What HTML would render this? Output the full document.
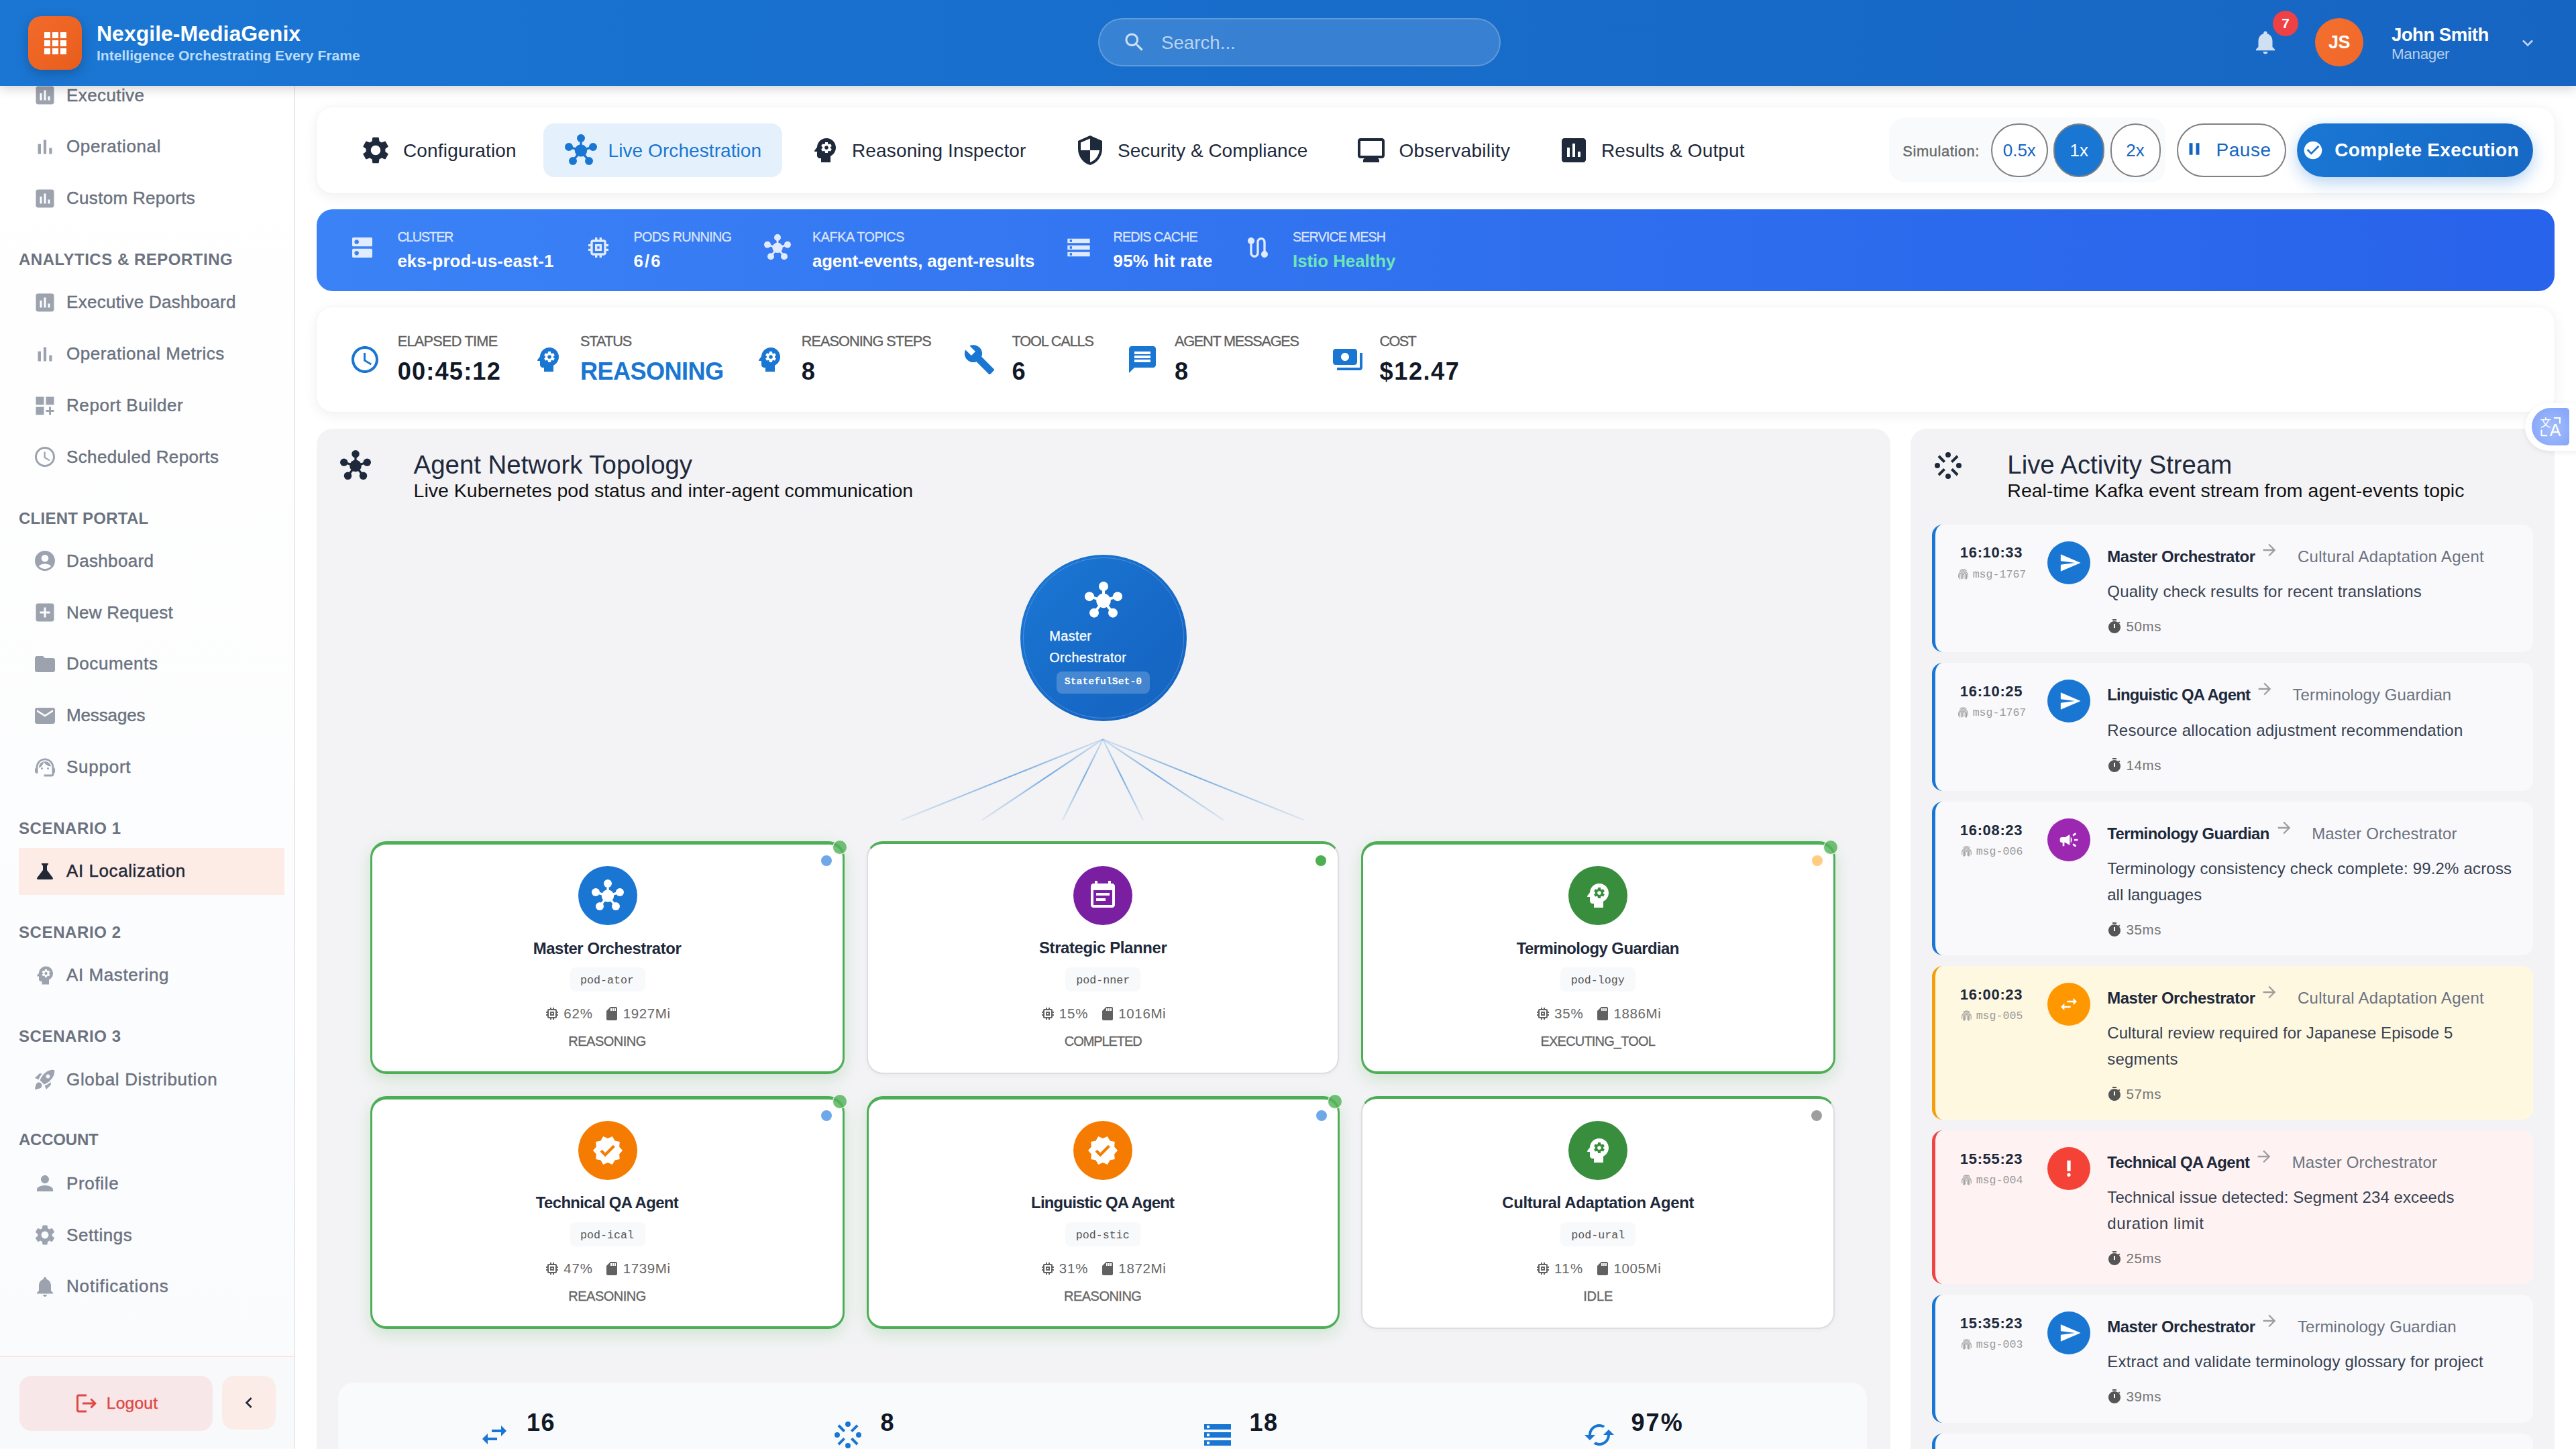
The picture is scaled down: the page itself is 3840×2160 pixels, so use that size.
<!DOCTYPE html>
<html lang="en"><head><meta charset="utf-8"><title>Nexgile-MediaGenix</title>
<style>
*{box-sizing:border-box;margin:0;padding:0}
html,body{width:3840px;height:2160px;overflow:hidden;background:#fff}
@media (max-width:2000px){html{zoom:.5}}
body{font-family:"Liberation Sans",sans-serif;color:#1f2937;position:relative;-webkit-font-smoothing:antialiased}
.ic{display:block;flex:none}
.abs{position:absolute}
.mono{font-family:"Liberation Mono","DejaVu Sans Mono",monospace}
/* ---------- header ---------- */
#hdr{position:absolute;left:0;top:0;width:3840px;height:128px;background:linear-gradient(90deg,#1b76d3 0%,#186dcb 50%,#1765c2 100%);box-shadow:0 4px 16px rgba(0,0,0,.18);z-index:20}
#logo{position:absolute;left:42px;top:24px;width:80px;height:80px;border-radius:20px;background:linear-gradient(135deg,#f26b2a,#e85d1c);box-shadow:0 6px 18px rgba(0,0,0,.22)}
#logo i{position:absolute;width:9px;height:9px;background:#fff}
#brand{position:absolute;left:144px;top:28.2px;font-size:32px;font-weight:700;color:#fff;line-height:44px;white-space:nowrap}
#tag{position:absolute;left:144px;top:68px;font-size:21.1px;font-weight:700;color:#bbdcfb;line-height:30px;white-space:nowrap}
#search{position:absolute;left:1637px;top:27px;width:600px;height:72px;border-radius:36px;background:rgba(255,255,255,.14);border:2px solid rgba(255,255,255,.2)}
#search span{position:absolute;left:92px;top:13px;font-size:27.7px;line-height:44px;color:rgba(255,255,255,.66)}
#badge{position:absolute;left:3388px;top:16px;width:38px;height:38px;border-radius:50%;background:#ee4145;color:#fff;font-weight:700;font-size:21px;line-height:38px;text-align:center}
#avatar{position:absolute;left:3451px;top:27px;width:72px;height:72px;border-radius:50%;background:linear-gradient(135deg,#f46f2c,#f0682b);color:#fff;font-weight:700;font-size:27px;line-height:72px;text-align:center;letter-spacing:-.5px}
#uname{position:absolute;left:3565px;top:31.5px;font-size:27.6px;font-weight:700;color:#fff;line-height:40px;white-space:nowrap;letter-spacing:-0.55px}
#urole{position:absolute;left:3565px;top:66px;font-size:22.4px;letter-spacing:-.3px;color:rgba(255,255,255,.7);line-height:30px;white-space:nowrap}
/* ---------- sidebar ---------- */
#side{position:absolute;left:0;top:128px;width:440px;height:2032px;background:linear-gradient(180deg,#ffffff 0%,#fafbfd 100%);border-right:2px solid #e8eaee;overflow:hidden;z-index:5}
.si{position:absolute;left:28px;width:396px;height:70px;display:flex;align-items:center;padding-left:21px;color:#6b7280;font-size:26px;white-space:nowrap}
.si .ic{margin-right:14px}
.si span{-webkit-text-stroke:.45px currentColor}
.si.act{background:#fdebe6;color:#1f2937}
.sh{position:absolute;left:28px;font-size:24px;font-weight:700;letter-spacing:2.5px;color:#6b7280;line-height:30px;white-space:nowrap}
#sfoot{position:absolute;left:0;top:1892.5px;width:438px;height:137px;background:#f8f9fa;border-top:2px solid #fde3de}
#logout{position:absolute;left:29px;top:28px;width:288px;height:82px;border-radius:18px;background:#f8e7e8;color:#e04644;font-size:24.6px;display:flex;align-items:center;justify-content:center}
#logout .ic{margin-right:12px}
#logout span{-webkit-text-stroke:.4px currentColor}
#collapse{position:absolute;left:331px;top:28px;width:80px;height:80px;border-radius:18px;background:#fbece7;display:flex;align-items:center;justify-content:center}
/* ---------- main ---------- */
.tx{position:absolute;white-space:nowrap}
.card{position:absolute;background:#fff;border-radius:24px;box-shadow:0 4px 20px rgba(15,23,42,.07),0 0 3px rgba(15,23,42,.04)}
#tabs{left:472px;top:160px;width:3336px;height:128px}
.tabact{position:absolute;left:338px;top:24px;width:356px;height:80px;border-radius:16px;background:#e4f1fd}
#simgrp{position:absolute;left:2344px;top:15px;width:412px;height:97px;border-radius:24px;background:#f8fafc}
.pill{position:absolute;top:24px;height:80px;border-radius:40px;border:2px solid #808080;background:#fff;color:#1565c0;text-align:center;line-height:76px;font-size:26px;white-space:nowrap}
.pill.on{background:#1976d2;color:#fff}
#complete{position:absolute;left:2952px;top:24px;width:352px;height:80px;border-radius:40px;background:linear-gradient(100deg,#1a77d4,#1668c4);box-shadow:0 8px 24px rgba(25,118,210,.32)}
#cluster{position:absolute;left:472px;top:312px;width:3336px;height:122px;border-radius:24px;background:linear-gradient(90deg,#3b82f6 0%,#2f6fee 55%,#2863eb 100%)}
#stats{left:472px;top:458px;width:3336px;height:156px}
/* ---------- topology ---------- */
#topo{position:absolute;left:472px;top:639px;width:2346px;height:1560px;border-radius:24px;background:#f3f3f5}
#bigc{position:absolute;left:1048.5px;top:187.5px;width:248px;height:248px;border-radius:50%;background:linear-gradient(135deg,#1b78d4 0%,#1769c7 60%,#1563c0 100%)}
#bigc:after{content:"";position:absolute;left:4px;top:4px;right:4px;bottom:4px;border-radius:50%;border:1.5px solid rgba(255,255,255,.22)}
#sset{position:absolute;left:54px;top:174px;width:139px;height:33px;border-radius:8px;background:rgba(255,255,255,.2)}
.ag{position:absolute;width:707px;height:348px;border-radius:24px;background:#fff;overflow:hidden}
.ag.on{border:4px solid #4eae57;border-top-width:5px;border-left-width:3.5px;border-right-width:3.5px;box-shadow:0 8px 24px rgba(76,175,80,.22)}
.ag.off{border:2px solid #dcdde0;border-top:4.5px solid #4eae57;box-shadow:0 2px 6px rgba(0,0,0,.04)}
.ag .circ{position:absolute;left:50%;top:37px;width:88px;height:88px;margin-left:-44px;border-radius:50%;display:flex;align-items:center;justify-content:center}
.podchip{position:absolute;left:50%;top:188.5px;width:112px;height:36px;margin-left:-56px;border-radius:8px;background:#f7f9fb}
.gdot{position:absolute;width:22px;height:22px;border-radius:50%;background:rgba(84,178,90,.82);border:1.5px solid rgba(255,255,255,.85);z-index:3}
.sdot{position:absolute;width:16px;height:16px;border-radius:50%;z-index:3}
#strip{position:absolute;left:32px;top:1422px;width:2279px;height:160px;border-radius:24px;background:#f8fafc}
/* ---------- activity ---------- */
#act{position:absolute;left:2848px;top:639px;width:960px;height:1560px;border-radius:24px;background:#f3f3f5;overflow:hidden}
.ev{position:absolute;left:32px;width:896px;border-radius:16px;border-left:5.5px solid #1976d2;background:#f9fafb}
.ev .cir{position:absolute;left:164.7px;top:24.9px;width:64px;height:64px;border-radius:50%;display:flex;align-items:center;justify-content:center}
.ev .row{position:absolute;left:253.8px;display:flex;align-items:flex-start;white-space:nowrap}
.ev .msgid{position:absolute;left:9px;width:160px;display:flex;justify-content:center;align-items:center;color:#999;font-size:16.6px;white-space:nowrap}
#xl{position:absolute;left:3764px;top:600.5px;width:90px;height:71px;border-radius:36px 0 0 36px;background:#fff;box-shadow:0 2px 8px rgba(0,0,0,.08);z-index:9}
#xl i{position:absolute;left:9.8px;top:7.6px;width:56.2px;height:56px;border-radius:28px 5px 5px 28px;background:radial-gradient(circle at 55% 55%,#a3bdf9 0%,#8aa9fb 70%,#86a4fb 100%)}
</style></head>
<body>
<div id="hdr"><div id="logo"><i style="left:23.5px;top:23.5px"></i><i style="left:35.5px;top:23.5px"></i><i style="left:47.5px;top:23.5px"></i><i style="left:23.5px;top:35.5px"></i><i style="left:35.5px;top:35.5px"></i><i style="left:47.5px;top:35.5px"></i><i style="left:23.5px;top:47.5px"></i><i style="left:35.5px;top:47.5px"></i><i style="left:47.5px;top:47.5px"></i></div><div id="brand">Nexgile-MediaGenix</div><div id="tag">Intelligence Orchestrating Every Frame</div><div id="search"><svg class="ic" style="width:36px;height:36px;position:absolute;left:34px;top:16px" viewBox="0 0 24 24" fill="rgba(255,255,255,.75)"><path d="M15.5 14h-.79l-.28-.27C15.41 12.59 16 11.11 16 9.5 16 5.91 13.09 3 9.5 3S3 5.91 3 9.5 5.91 16 9.5 16c1.61 0 3.09-.59 4.23-1.57l.27.28v.79l5 4.99L20.49 19l-4.99-5zm-6 0C7.01 14 5 11.99 5 9.5S7.01 5 9.5 5 14 7.01 14 9.5 11.99 14 9.5 14z"/></svg><span>Search...</span></div><svg class="ic" style="width:42px;height:42px;position:absolute;left:3356px;top:42px" viewBox="0 0 24 24" fill="rgba(255,255,255,.8)"><path d="M12 22c1.1 0 2-.9 2-2h-4c0 1.1.89 2 2 2zm6-6v-5c0-3.07-1.64-5.64-4.5-6.32V4c0-.83-.67-1.5-1.5-1.5s-1.5.67-1.5 1.5v.68C7.63 5.36 6 7.92 6 11v5l-2 2v1h16v-1l-2-2z"/></svg><div id="badge">7</div><div id="avatar">JS</div><div id="uname">John Smith</div><div id="urole">Manager</div><svg class="ic" style="width:32px;height:32px;position:absolute;left:3752px;top:48px" viewBox="0 0 24 24" fill="rgba(255,255,255,.75)"><path d="M7.41 8.59 12 13.17l4.59-4.58L18 10l-6 6-6-6 1.41-1.41z"/></svg></div><div id="side"><div class="si" style="top:-20.9px"><svg class="ic" style="width:36px;height:36px;" viewBox="0 0 24 24" fill="#9ca3af"><path d="M19 3H5c-1.1 0-2 .9-2 2v14c0 1.1.9 2 2 2h14c1.1 0 2-.9 2-2V5c0-1.1-.9-2-2-2zM9 17H7v-7h2v7zm4 0h-2V7h2v10zm4 0h-2v-4h2v4z"/></svg><span style="letter-spacing:0.4px">Executive</span></div><div class="si" style="top:55.9px"><svg class="ic" style="width:36px;height:36px;" viewBox="0 0 24 24" fill="#9ca3af"><path d="M5 9.2h3V19H5zM10.6 5h2.8v14h-2.8zm5.6 8H19v6h-2.8z"/></svg><span style="letter-spacing:0.6px">Operational</span></div><div class="si" style="top:132.7px"><svg class="ic" style="width:36px;height:36px;" viewBox="0 0 24 24" fill="#9ca3af"><path d="M19 3H5c-1.1 0-2 .9-2 2v14c0 1.1.9 2 2 2h14c1.1 0 2-.9 2-2V5c0-1.1-.9-2-2-2zM9 17H7v-7h2v7zm4 0h-2V7h2v10zm4 0h-2v-4h2v4z"/></svg><span style="letter-spacing:0.31px">Custom Reports</span></div><div class="sh" style="top:244.1px;letter-spacing:0.51px">ANALYTICS &amp; REPORTING</div><div class="si" style="top:287.9px"><svg class="ic" style="width:36px;height:36px;" viewBox="0 0 24 24" fill="#9ca3af"><path d="M19 3H5c-1.1 0-2 .9-2 2v14c0 1.1.9 2 2 2h14c1.1 0 2-.9 2-2V5c0-1.1-.9-2-2-2zM9 17H7v-7h2v7zm4 0h-2V7h2v10zm4 0h-2v-4h2v4z"/></svg><span style="letter-spacing:0.3px">Executive Dashboard</span></div><div class="si" style="top:364.7px"><svg class="ic" style="width:36px;height:36px;" viewBox="0 0 24 24" fill="#9ca3af"><path d="M5 9.2h3V19H5zM10.6 5h2.8v14h-2.8zm5.6 8H19v6h-2.8z"/></svg><span style="letter-spacing:0.55px">Operational Metrics</span></div><div class="si" style="top:441.5px"><svg class="ic" style="width:36px;height:36px;" viewBox="0 0 24 24" fill="#9ca3af"><path d="M3 3h8v8H3zm10 0h8v8h-8zM3 13h8v8H3zm15 0h-2v3h-3v2h3v3h2v-3h3v-2h-3z"/></svg><span style="letter-spacing:0.58px">Report Builder</span></div><div class="si" style="top:518.3px"><svg class="ic" style="width:36px;height:36px;" viewBox="0 0 24 24" fill="#9ca3af"><path d="M11.99 2C6.47 2 2 6.48 2 12s4.47 10 9.99 10C17.52 22 22 17.52 22 12S17.52 2 11.99 2zM12 20c-4.42 0-8-3.58-8-8s3.58-8 8-8 8 3.58 8 8-3.58 8-8 8zm.5-13H11v6l5.25 3.15.75-1.23-4.5-2.67z"/></svg><span style="letter-spacing:0.36px">Scheduled Reports</span></div><div class="sh" style="top:629.5px;letter-spacing:0.25px">CLIENT PORTAL</div><div class="si" style="top:673.3px"><svg class="ic" style="width:36px;height:36px;" viewBox="0 0 24 24" fill="#9ca3af"><path d="M12 2C6.48 2 2 6.48 2 12s4.48 10 10 10 10-4.48 10-10S17.52 2 12 2zm0 4c1.93 0 3.5 1.57 3.5 3.5S13.93 13 12 13s-3.5-1.57-3.5-3.5S10.07 6 12 6zm0 14c-2.03 0-4.43-.82-6.14-2.88C7.55 15.8 9.68 15 12 15s4.45.8 6.14 2.12C16.43 19.18 14.03 20 12 20z"/></svg><span style="letter-spacing:0.35px">Dashboard</span></div><div class="si" style="top:750.1px"><svg class="ic" style="width:36px;height:36px;" viewBox="0 0 24 24" fill="#9ca3af"><path d="M19 3H5c-1.11 0-2 .9-2 2v14c0 1.1.89 2 2 2h14c1.1 0 2-.9 2-2V5c0-1.1-.9-2-2-2zm-2 10h-4v4h-2v-4H7v-2h4V7h2v4h4v2z"/></svg><span style="letter-spacing:0.27px">New Request</span></div><div class="si" style="top:826.9px"><svg class="ic" style="width:36px;height:36px;" viewBox="0 0 24 24" fill="#9ca3af"><path d="M10 4H4c-1.1 0-1.99.9-1.99 2L2 18c0 1.1.9 2 2 2h16c1.1 0 2-.9 2-2V8c0-1.1-.9-2-2-2h-8l-2-2z"/></svg><span style="letter-spacing:0.55px">Documents</span></div><div class="si" style="top:903.7px"><svg class="ic" style="width:36px;height:36px;" viewBox="0 0 24 24" fill="#9ca3af"><path d="M20 4H4c-1.1 0-1.99.9-1.99 2L2 18c0 1.1.9 2 2 2h16c1.1 0 2-.9 2-2V6c0-1.1-.9-2-2-2zm0 4-8 5-8-5V6l8 5 8-5v2z"/></svg><span style="letter-spacing:-0.14px">Messages</span></div><div class="si" style="top:980.5px"><svg class="ic" style="width:36px;height:36px;" viewBox="0 0 24 24" fill="#9ca3af"><path d="M21 12.22C21 6.73 16.74 3 12 3c-4.69 0-9 3.65-9 9.28-.6.34-1 .98-1 1.72v2c0 1.1.9 2 2 2h1v-6.1c0-3.87 3.13-7 7-7s7 3.13 7 7V19h-8v2h8c1.1 0 2-.9 2-2v-1.22c.59-.31 1-.92 1-1.64v-2.3c0-.7-.41-1.31-1-1.62zM9 12a1 1 0 1 0 0 2 1 1 0 0 0 0-2zm6 0a1 1 0 1 0 0 2 1 1 0 0 0 0-2zM18 11.03C17.52 8.18 15.04 6 12.05 6c-3.03 0-6.29 2.51-6.03 6.45 2.47-1.01 4.33-3.21 4.86-5.89 1.31 2.63 4 4.44 7.12 4.47z"/></svg><span style="letter-spacing:0.75px">Support</span></div><div class="sh" style="top:1091.9px;letter-spacing:0.6px">SCENARIO 1</div><div class="si act" style="top:1135.7px"><svg class="ic" style="width:36px;height:36px;" viewBox="0 0 24 24" fill="#1f2937"><path d="M19.8 18.4 14 10.67V6.5l1.35-1.69c.26-.33.03-.81-.39-.81H9.04c-.42 0-.65.48-.39.81L10 6.5v4.17L4.2 18.4c-.49.66-.02 1.6.8 1.6h14c.82 0 1.29-.94.8-1.6z"/></svg><span style="letter-spacing:0.58px">AI Localization</span></div><div class="sh" style="top:1247.1px;letter-spacing:0.6px">SCENARIO 2</div><div class="si" style="top:1290.9px"><svg class="ic" style="width:36px;height:36px;" viewBox="0 0 24 24" fill="#9ca3af"><path d="M13 8.57c-.79 0-1.43.64-1.43 1.43s.64 1.43 1.43 1.43 1.43-.64 1.43-1.43-.64-1.43-1.43-1.43zM13 3C9.25 3 6.2 5.94 6.02 9.64L4.1 12.2c-.25.33-.01.8.4.8H6v3c0 1.1.9 2 2 2h1v3h7v-4.68c2.36-1.12 4-3.53 4-6.32 0-3.87-3.13-7-7-7zm3 7c0 .13-.01.26-.02.39l.83.66c.08.06.1.16.05.25l-.8 1.39c-.05.09-.16.12-.24.09l-.99-.4c-.21.16-.43.29-.67.39L14 13.83c-.01.1-.1.17-.2.17h-1.6c-.1 0-.18-.07-.2-.17l-.15-1.06c-.25-.1-.47-.23-.68-.39l-.99.4c-.09.03-.2 0-.25-.09l-.8-1.39c-.05-.08-.03-.19.05-.25l.84-.66c-.01-.13-.02-.26-.02-.39s.02-.27.04-.39l-.85-.66c-.08-.06-.1-.16-.05-.26l.8-1.38c.05-.09.15-.12.24-.09l1 .4c.2-.15.43-.29.67-.39L12 6.17c.02-.1.1-.17.2-.17h1.6c.1 0 .18.07.2.17l.15 1.06c.24.1.46.23.67.39l1-.4c.09-.03.2 0 .24.09l.8 1.38c.05.09.03.2-.05.26l-.85.66c.03.12.04.25.04.39z"/></svg><span style="letter-spacing:0.59px">AI Mastering</span></div><div class="sh" style="top:1402.3px;letter-spacing:0.6px">SCENARIO 3</div><div class="si" style="top:1446.1px"><svg class="ic" style="width:36px;height:36px;" viewBox="0 0 24 24" fill="#9ca3af"><path d="M9.19 6.35c-2.04 2.29-3.44 5.58-3.57 5.89L2 10.69l4.05-4.05c.47-.47 1.15-.68 1.81-.55l1.33.26zM11.17 17s3.74-1.55 5.89-3.7c5.4-5.4 4.5-9.62 4.21-10.57-.95-.3-5.17-1.19-10.57 4.21C8.55 9.09 7 12.83 7 12.83L11.17 17zm6.48-2.19c-2.29 2.04-5.58 3.44-5.89 3.57L13.31 22l4.05-4.05c.47-.47.68-1.15.55-1.81l-.26-1.33zM9 18c0 .83-.34 1.58-.88 2.12C6.94 21.3 2 22 2 22s.7-4.94 1.88-6.12C4.42 15.34 5.17 15 6 15c1.66 0 3 1.34 3 3zm4-9c0-1.1.9-2 2-2s2 .9 2 2-.9 2-2 2-2-.9-2-2z"/></svg><span style="letter-spacing:0.68px">Global Distribution</span></div><div class="sh" style="top:1555.5px;letter-spacing:-0.21px">ACCOUNT</div><div class="si" style="top:1601.3px"><svg class="ic" style="width:36px;height:36px;" viewBox="0 0 24 24" fill="#9ca3af"><path d="M12 12c2.21 0 4-1.79 4-4s-1.79-4-4-4-4 1.79-4 4 1.79 4 4 4zm0 2c-2.67 0-8 1.34-8 4v2h16v-2c0-2.66-5.33-4-8-4z"/></svg><span style="letter-spacing:0.67px">Profile</span></div><div class="si" style="top:1678.1px"><svg class="ic" style="width:36px;height:36px;" viewBox="0 0 24 24" fill="#9ca3af"><path d="M19.14 12.94c.04-.3.06-.61.06-.94 0-.32-.02-.64-.07-.94l2.03-1.58c.18-.14.23-.41.12-.61l-1.92-3.32c-.12-.22-.37-.29-.59-.22l-2.39.96c-.5-.38-1.03-.7-1.62-.94l-.36-2.54c-.04-.24-.24-.41-.48-.41h-3.84c-.24 0-.43.17-.47.41l-.36 2.54c-.59.24-1.13.57-1.62.94l-2.39-.96c-.22-.08-.47 0-.59.22L2.74 8.87c-.12.21-.08.47.12.61l2.03 1.58c-.05.3-.09.63-.09.94s.02.64.07.94l-2.03 1.58c-.18.14-.23.41-.12.61l1.92 3.32c.12.22.37.29.59.22l2.39-.96c.5.38 1.03.7 1.62.94l.36 2.54c.05.24.24.41.48.41h3.84c.24 0 .44-.17.47-.41l.36-2.54c.59-.24 1.13-.56 1.62-.94l2.39.96c.22.08.47 0 .59-.22l1.92-3.32c.12-.22.07-.47-.12-.61l-2.01-1.58zM12 15.6c-1.98 0-3.6-1.62-3.6-3.6s1.62-3.6 3.6-3.6 3.6 1.62 3.6 3.6-1.62 3.6-3.6 3.6z"/></svg><span style="letter-spacing:0.54px">Settings</span></div><div class="si" style="top:1754.9px"><svg class="ic" style="width:36px;height:36px;" viewBox="0 0 24 24" fill="#9ca3af"><path d="M12 22c1.1 0 2-.9 2-2h-4c0 1.1.89 2 2 2zm6-6v-5c0-3.07-1.64-5.64-4.5-6.32V4c0-.83-.67-1.5-1.5-1.5s-1.5.67-1.5 1.5v.68C7.63 5.36 6 7.92 6 11v5l-2 2v1h16v-1l-2-2z"/></svg><span style="letter-spacing:0.84px">Notifications</span></div><div id="sfoot"><div id="logout"><svg class="ic" style="width:36px;height:36px;" viewBox="0 0 24 24" fill="#e04644"><path d="m17 7-1.41 1.41L18.17 11H8v2h10.17l-2.58 2.58L17 17l5-5zM4 5h8V3H4c-1.1 0-2 .9-2 2v14c0 1.1.9 2 2 2h8v-2H4V5z"/></svg><span style="letter-spacing:0.18px">Logout</span></div><div id="collapse"><svg class="ic" style="width:32px;height:32px;" viewBox="0 0 24 24" fill="#1e293b"><path d="M15.41 7.41 14 6l-6 6 6 6 1.41-1.41L10.83 12z"/></svg></div></div></div><div id="tabs" class="card"><div class="tabact"></div><svg class="ic" style="width:48px;height:48px;position:absolute;left:64.0px;top:40px" viewBox="0 0 24 24" fill="#1e293b"><path d="M19.14 12.94c.04-.3.06-.61.06-.94 0-.32-.02-.64-.07-.94l2.03-1.58c.18-.14.23-.41.12-.61l-1.92-3.32c-.12-.22-.37-.29-.59-.22l-2.39.96c-.5-.38-1.03-.7-1.62-.94l-.36-2.54c-.04-.24-.24-.41-.48-.41h-3.84c-.24 0-.43.17-.47.41l-.36 2.54c-.59.24-1.13.57-1.62.94l-2.39-.96c-.22-.08-.47 0-.59.22L2.74 8.87c-.12.21-.08.47.12.61l2.03 1.58c-.05.3-.09.63-.09.94s.02.64.07.94l-2.03 1.58c-.18.14-.23.41-.12.61l1.92 3.32c.12.22.37.29.59.22l2.39-.96c.5.38 1.03.7 1.62.94l.36 2.54c.05.24.24.41.48.41h3.84c.24 0 .44-.17.47-.41l.36-2.54c.59-.24 1.13-.56 1.62-.94l2.39.96c.22.08.47 0 .59-.22l1.92-3.32c.12-.22.07-.47-.12-.61l-2.01-1.58zM12 15.6c-1.98 0-3.6-1.62-3.6-3.6s1.62-3.6 3.6-3.6 3.6 1.62 3.6 3.6-1.62 3.6-3.6 3.6z"/></svg><div class="tx" style="left:128.9px;top:47.5px;font-size:28px;line-height:33.6px;color:#1e293b;letter-spacing:0.18px;">Configuration</div><svg class="ic" style="width:48px;height:48px;position:absolute;left:369.6px;top:40px" viewBox="0 0 24 24" fill="#1976d2"><g stroke="#1976d2" stroke-width="1.7"><line x1="12" y1="12.2" x2="12" y2="3"/><line x1="12" y1="12.2" x2="3" y2="9.5"/><line x1="12" y1="12.2" x2="21" y2="9.5"/><line x1="12" y1="12.2" x2="6" y2="20"/><line x1="12" y1="12.2" x2="18" y2="20"/></g><circle cx="12" cy="3" r="3"/><circle cx="3" cy="9.5" r="3"/><circle cx="21" cy="9.5" r="3"/><circle cx="6" cy="20" r="3"/><circle cx="18" cy="20" r="3"/><circle cx="12" cy="12.2" r="4.6"/></svg><div class="tx" style="left:434.5px;top:47.5px;font-size:28px;line-height:33.6px;color:#1976d2;letter-spacing:0.08px;">Live Orchestration</div><svg class="ic" style="width:48px;height:48px;position:absolute;left:734.0px;top:40px" viewBox="0 0 24 24" fill="#1e293b"><path d="M13 8.57c-.79 0-1.43.64-1.43 1.43s.64 1.43 1.43 1.43 1.43-.64 1.43-1.43-.64-1.43-1.43-1.43zM13 3C9.25 3 6.2 5.94 6.02 9.64L4.1 12.2c-.25.33-.01.8.4.8H6v3c0 1.1.9 2 2 2h1v3h7v-4.68c2.36-1.12 4-3.53 4-6.32 0-3.87-3.13-7-7-7zm3 7c0 .13-.01.26-.02.39l.83.66c.08.06.1.16.05.25l-.8 1.39c-.05.09-.16.12-.24.09l-.99-.4c-.21.16-.43.29-.67.39L14 13.83c-.01.1-.1.17-.2.17h-1.6c-.1 0-.18-.07-.2-.17l-.15-1.06c-.25-.1-.47-.23-.68-.39l-.99.4c-.09.03-.2 0-.25-.09l-.8-1.39c-.05-.08-.03-.19.05-.25l.84-.66c-.01-.13-.02-.26-.02-.39s.02-.27.04-.39l-.85-.66c-.08-.06-.1-.16-.05-.26l.8-1.38c.05-.09.15-.12.24-.09l1 .4c.2-.15.43-.29.67-.39L12 6.17c.02-.1.1-.17.2-.17h1.6c.1 0 .18.07.2.17l.15 1.06c.24.1.46.23.67.39l1-.4c.09-.03.2 0 .24.09l.8 1.38c.05.09.03.2-.05.26l-.85.66c.03.12.04.25.04.39z"/></svg><div class="tx" style="left:798.0px;top:47.5px;font-size:28px;line-height:33.6px;color:#1e293b;letter-spacing:0.14px;">Reasoning Inspector</div><svg class="ic" style="width:48px;height:48px;position:absolute;left:1128.5px;top:40px" viewBox="0 0 24 24" fill="#1e293b"><path d="M12 1 3 5v6c0 5.55 3.84 10.74 9 12 5.16-1.26 9-6.45 9-12V5l-9-4zm0 10.99h7c-.53 4.12-3.28 7.79-7 8.94V12H5V6.3l7-3.11v8.8z"/></svg><div class="tx" style="left:1194.0px;top:47.5px;font-size:28px;line-height:33.6px;color:#1e293b;letter-spacing:0px;">Security &amp; Compliance</div><svg class="ic" style="width:48px;height:48px;position:absolute;left:1548.3px;top:40px" viewBox="0 0 24 24" fill="#1e293b"><path d="M20 3H4c-1.1 0-2 .9-2 2v11c0 1.1.9 2 2 2h3l-1 1v2h12v-2l-1-1h3c1.1 0 2-.9 2-2V5c0-1.1-.9-2-2-2zm0 13H4V5h16v11z"/></svg><div class="tx" style="left:1613.5px;top:47.5px;font-size:28px;line-height:33.6px;color:#1e293b;letter-spacing:0.3px;">Observability</div><svg class="ic" style="width:48px;height:48px;position:absolute;left:1850.4px;top:40px" viewBox="0 0 24 24" fill="#1e293b"><path d="M19 3H5c-1.1 0-2 .9-2 2v14c0 1.1.9 2 2 2h14c1.1 0 2-.9 2-2V5c0-1.1-.9-2-2-2zM9 17H7v-7h2v7zm4 0h-2V7h2v10zm4 0h-2v-4h2v4z"/></svg><div class="tx" style="left:1915.0px;top:47.5px;font-size:28px;line-height:33.6px;color:#1e293b;letter-spacing:0.12px;">Results &amp; Output</div><div id="simgrp"></div><div class="tx" style="left:2364.3px;top:53.3px;font-size:21.9px;line-height:26.3px;color:#666;-webkit-text-stroke:0.36px currentColor;letter-spacing:0.58px;">Simulation:</div><div class="pill" style="left:2496px;width:84.6px">0.5x</div><div class="pill on" style="left:2589.2px;width:76.3px">1x</div><div class="pill" style="left:2673.6px;width:75px">2x</div><div class="pill" style="left:2772.9px;width:162.8px"></div><svg class="ic" style="width:30px;height:30px;position:absolute;left:2784px;top:47.3px" viewBox="0 0 24 24" fill="#1565c0"><path d="M6 19h4V5H6v14zm8-14v14h4V5h-4z"/></svg><div class="tx" style="left:2831.4px;top:47.2px;font-size:28px;line-height:33.6px;color:#1565c0;letter-spacing:0.6px;">Pause</div><div id="complete"></div><svg class="ic" style="width:32px;height:32px;position:absolute;left:2960px;top:47.5px" viewBox="0 0 24 24" fill="#fff"><path d="M12 2C6.48 2 2 6.48 2 12s4.48 10 10 10 10-4.48 10-10S17.52 2 12 2zm-2 15-5-5 1.41-1.41L10 14.17l7.59-7.59L19 8l-9 9z"/></svg><div class="tx" style="left:3008.3px;top:47.2px;font-size:28px;line-height:33.6px;color:#fff;font-weight:700;letter-spacing:0.3px;">Complete Execution</div></div><div id="cluster"><svg class="ic" style="width:40px;height:40px;position:absolute;left:48.0px;top:37px" viewBox="0 0 24 24" fill="rgba(255,255,255,.85)"><path d="M20 13H4c-.55 0-1 .45-1 1v6c0 .55.45 1 1 1h16c.55 0 1-.45 1-1v-6c0-.55-.45-1-1-1zM7 19c-1.1 0-2-.9-2-2s.9-2 2-2 2 .9 2 2-.9 2-2 2zM20 3H4c-.55 0-1 .45-1 1v6c0 .55.45 1 1 1h16c.55 0 1-.45 1-1V4c0-.55-.45-1-1-1zM7 9c-1.1 0-2-.9-2-2s.9-2 2-2 2 .9 2 2-.9 2-2 2z"/></svg><div class="tx" style="left:120.4px;top:29.9px;font-size:19.8px;line-height:23.8px;color:rgba(255,255,255,.78);-webkit-text-stroke:0.33px currentColor;letter-spacing:-1.41px;">CLUSTER</div><div class="tx" style="left:120.4px;top:61.7px;font-size:25.8px;line-height:31.0px;color:#fff;font-weight:700;letter-spacing:0.12px;">eks-prod-us-east-1</div><svg class="ic" style="width:40px;height:40px;position:absolute;left:400.4px;top:37px" viewBox="0 0 24 24" fill="rgba(255,255,255,.85)"><path d="M15 9H9v6h6V9zm-2 4h-2v-2h2v2zm8-2V9h-2V7c0-1.1-.9-2-2-2h-2V3h-2v2h-2V3H9v2H7c-1.1 0-2 .9-2 2v2H3v2h2v2H3v2h2v2c0 1.1.9 2 2 2h2v2h2v-2h2v2h2v-2h2c1.1 0 2-.9 2-2v-2h2v-2h-2v-2h2zm-4 6H7V7h10v10z"/></svg><div class="tx" style="left:472.5px;top:29.9px;font-size:19.8px;line-height:23.8px;color:rgba(255,255,255,.78);-webkit-text-stroke:0.33px currentColor;letter-spacing:-0.67px;">PODS RUNNING</div><div class="tx" style="left:472.5px;top:61.7px;font-size:25.8px;line-height:31.0px;color:#fff;font-weight:700;letter-spacing:2.12px;">6/6</div><svg class="ic" style="width:40px;height:40px;position:absolute;left:666.8px;top:37px;opacity:.85;" viewBox="0 0 24 24" fill="rgb(255,255,255)"><g stroke="rgb(255,255,255)" stroke-width="1.7"><line x1="12" y1="12.2" x2="12" y2="3"/><line x1="12" y1="12.2" x2="3" y2="9.5"/><line x1="12" y1="12.2" x2="21" y2="9.5"/><line x1="12" y1="12.2" x2="6" y2="20"/><line x1="12" y1="12.2" x2="18" y2="20"/></g><circle cx="12" cy="3" r="3"/><circle cx="3" cy="9.5" r="3"/><circle cx="21" cy="9.5" r="3"/><circle cx="6" cy="20" r="3"/><circle cx="18" cy="20" r="3"/><circle cx="12" cy="12.2" r="4.6"/></svg><div class="tx" style="left:739.0px;top:29.9px;font-size:19.8px;line-height:23.8px;color:rgba(255,255,255,.78);-webkit-text-stroke:0.33px currentColor;letter-spacing:-0.44px;">KAFKA TOPICS</div><div class="tx" style="left:739.0px;top:61.7px;font-size:25.8px;line-height:31.0px;color:#fff;font-weight:700;letter-spacing:-0.16px;">agent-events, agent-results</div><svg class="ic" style="width:40px;height:40px;position:absolute;left:1115.5px;top:37px" viewBox="0 0 24 24" fill="rgba(255,255,255,.85)"><path d="M2 20h20v-4H2v4zm2-3h2v2H4v-2zM2 4v4h20V4H2zm4 3H4V5h2v2zm-4 7h20v-4H2v4zm2-3h2v2H4v-2z"/></svg><div class="tx" style="left:1187.6px;top:29.9px;font-size:19.8px;line-height:23.8px;color:rgba(255,255,255,.78);-webkit-text-stroke:0.33px currentColor;letter-spacing:-0.91px;">REDIS CACHE</div><div class="tx" style="left:1187.6px;top:61.7px;font-size:25.8px;line-height:31.0px;color:#fff;font-weight:700;letter-spacing:0.26px;">95% hit rate</div><svg class="ic" style="width:40px;height:40px;position:absolute;left:1383.0px;top:37px" viewBox="0 0 24 24" fill="rgba(255,255,255,.85)"><path d="M19 15.18V7c0-2.21-1.79-4-4-4s-4 1.79-4 4v10c0 1.1-.9 2-2 2s-2-.9-2-2V8.82C8.16 8.4 9 7.3 9 6c0-1.66-1.34-3-3-3S3 4.34 3 6c0 1.3.84 2.4 2 2.82V17c0 2.21 1.79 4 4 4s4-1.79 4-4V7c0-1.1.9-2 2-2s2 .9 2 2v8.18c-1.16.41-2 1.51-2 2.82 0 1.66 1.34 3 3 3s3-1.34 3-3c0-1.3-.84-2.4-2-2.82z"/></svg><div class="tx" style="left:1455.0px;top:29.9px;font-size:19.8px;line-height:23.8px;color:rgba(255,255,255,.78);-webkit-text-stroke:0.33px currentColor;letter-spacing:-0.92px;">SERVICE MESH</div><div class="tx" style="left:1455.0px;top:61.7px;font-size:25.8px;line-height:31.0px;color:#6ee7b7;font-weight:700;letter-spacing:0px;">Istio Healthy</div></div><div id="stats" class="card"><svg class="ic" style="width:48px;height:48px;position:absolute;left:48.4px;top:54px" viewBox="0 0 24 24" fill="#1976d2"><path d="M11.99 2C6.47 2 2 6.48 2 12s4.47 10 9.99 10C17.52 22 22 17.52 22 12S17.52 2 11.99 2zM12 20c-4.42 0-8-3.58-8-8s3.58-8 8-8 8 3.58 8 8-3.58 8-8 8zm.5-13H11v6l5.25 3.15.75-1.23-4.5-2.67z"/></svg><div class="tx" style="left:120.8px;top:37.5px;font-size:21.7px;line-height:26.0px;color:#616161;-webkit-text-stroke:0.36px currentColor;letter-spacing:-0.74px;">ELAPSED TIME</div><div class="tx" style="left:120.8px;top:74.1px;font-size:36.2px;line-height:43.4px;color:#111827;font-weight:700;letter-spacing:1.16px;">00:45:12</div><svg class="ic" style="width:48px;height:48px;position:absolute;left:321.0px;top:54px" viewBox="0 0 24 24" fill="#1976d2"><path d="M13 8.57c-.79 0-1.43.64-1.43 1.43s.64 1.43 1.43 1.43 1.43-.64 1.43-1.43-.64-1.43-1.43-1.43zM13 3C9.25 3 6.2 5.94 6.02 9.64L4.1 12.2c-.25.33-.01.8.4.8H6v3c0 1.1.9 2 2 2h1v3h7v-4.68c2.36-1.12 4-3.53 4-6.32 0-3.87-3.13-7-7-7zm3 7c0 .13-.01.26-.02.39l.83.66c.08.06.1.16.05.25l-.8 1.39c-.05.09-.16.12-.24.09l-.99-.4c-.21.16-.43.29-.67.39L14 13.83c-.01.1-.1.17-.2.17h-1.6c-.1 0-.18-.07-.2-.17l-.15-1.06c-.25-.1-.47-.23-.68-.39l-.99.4c-.09.03-.2 0-.25-.09l-.8-1.39c-.05-.08-.03-.19.05-.25l.84-.66c-.01-.13-.02-.26-.02-.39s.02-.27.04-.39l-.85-.66c-.08-.06-.1-.16-.05-.26l.8-1.38c.05-.09.15-.12.24-.09l1 .4c.2-.15.43-.29.67-.39L12 6.17c.02-.1.1-.17.2-.17h1.6c.1 0 .18.07.2.17l.15 1.06c.24.1.46.23.67.39l1-.4c.09-.03.2 0 .24.09l.8 1.38c.05.09.03.2-.05.26l-.85.66c.03.12.04.25.04.39z"/></svg><div class="tx" style="left:393.0px;top:37.5px;font-size:21.7px;line-height:26.0px;color:#616161;-webkit-text-stroke:0.36px currentColor;letter-spacing:-1.0px;">STATUS</div><div class="tx" style="left:393.0px;top:74.1px;font-size:36.2px;line-height:43.4px;color:#1976d2;font-weight:700;letter-spacing:-0.62px;">REASONING</div><svg class="ic" style="width:48px;height:48px;position:absolute;left:651.0px;top:54px" viewBox="0 0 24 24" fill="#1976d2"><path d="M13 8.57c-.79 0-1.43.64-1.43 1.43s.64 1.43 1.43 1.43 1.43-.64 1.43-1.43-.64-1.43-1.43-1.43zM13 3C9.25 3 6.2 5.94 6.02 9.64L4.1 12.2c-.25.33-.01.8.4.8H6v3c0 1.1.9 2 2 2h1v3h7v-4.68c2.36-1.12 4-3.53 4-6.32 0-3.87-3.13-7-7-7zm3 7c0 .13-.01.26-.02.39l.83.66c.08.06.1.16.05.25l-.8 1.39c-.05.09-.16.12-.24.09l-.99-.4c-.21.16-.43.29-.67.39L14 13.83c-.01.1-.1.17-.2.17h-1.6c-.1 0-.18-.07-.2-.17l-.15-1.06c-.25-.1-.47-.23-.68-.39l-.99.4c-.09.03-.2 0-.25-.09l-.8-1.39c-.05-.08-.03-.19.05-.25l.84-.66c-.01-.13-.02-.26-.02-.39s.02-.27.04-.39l-.85-.66c-.08-.06-.1-.16-.05-.26l.8-1.38c.05-.09.15-.12.24-.09l1 .4c.2-.15.43-.29.67-.39L12 6.17c.02-.1.1-.17.2-.17h1.6c.1 0 .18.07.2.17l.15 1.06c.24.1.46.23.67.39l1-.4c.09-.03.2 0 .24.09l.8 1.38c.05.09.03.2-.05.26l-.85.66c.03.12.04.25.04.39z"/></svg><div class="tx" style="left:722.8px;top:37.5px;font-size:21.7px;line-height:26.0px;color:#616161;-webkit-text-stroke:0.36px currentColor;letter-spacing:-0.96px;">REASONING STEPS</div><div class="tx" style="left:722.8px;top:74.1px;font-size:36.2px;line-height:43.4px;color:#111827;font-weight:700;letter-spacing:1.58px;">8</div><svg class="ic" style="width:48px;height:48px;position:absolute;left:964.0px;top:54px" viewBox="0 0 24 24" fill="#1976d2"><path d="m22.7 19-9.1-9.1c.9-2.3.4-5-1.5-6.9-2-2-5-2.4-7.4-1.3L9 6 6 9 1.6 4.7C.4 7.1.9 10.1 2.9 12.1c1.9 1.9 4.6 2.4 6.9 1.5l9.1 9.1c.4.4 1 .4 1.4 0l2.3-2.3c.5-.4.5-1.1.1-1.4z"/></svg><div class="tx" style="left:1036.6px;top:37.5px;font-size:21.7px;line-height:26.0px;color:#616161;-webkit-text-stroke:0.36px currentColor;letter-spacing:-1.13px;">TOOL CALLS</div><div class="tx" style="left:1036.6px;top:74.1px;font-size:36.2px;line-height:43.4px;color:#111827;font-weight:700;letter-spacing:1.58px;">6</div><svg class="ic" style="width:48px;height:48px;position:absolute;left:1206.5px;top:54px" viewBox="0 0 24 24" fill="#1976d2"><path d="M20 2H4c-1.1 0-1.99.9-1.99 2L2 22l4-4h14c1.1 0 2-.9 2-2V4c0-1.1-.9-2-2-2zm-2 12H6v-2h12v2zm0-3H6V9h12v2zm0-3H6V6h12v2z"/></svg><div class="tx" style="left:1279.0px;top:37.5px;font-size:21.7px;line-height:26.0px;color:#616161;-webkit-text-stroke:0.36px currentColor;letter-spacing:-1.24px;">AGENT MESSAGES</div><div class="tx" style="left:1279.0px;top:74.1px;font-size:36.2px;line-height:43.4px;color:#111827;font-weight:700;letter-spacing:1.58px;">8</div><svg class="ic" style="width:48px;height:48px;position:absolute;left:1512.6px;top:54px" viewBox="0 0 24 24" fill="#1976d2"><path d="M19 14V6c0-1.1-.9-2-2-2H3c-1.1 0-2 .9-2 2v8c0 1.1.9 2 2 2h14c1.1 0 2-.9 2-2zm-9-1c-1.66 0-3-1.34-3-3s1.34-3 3-3 3 1.34 3 3-1.34 3-3 3zm13-6v11c0 1.1-.9 2-2 2H4v-2h17V7h2z"/></svg><div class="tx" style="left:1584.6px;top:37.5px;font-size:21.7px;line-height:26.0px;color:#616161;-webkit-text-stroke:0.36px currentColor;letter-spacing:-1.68px;">COST</div><div class="tx" style="left:1584.6px;top:74.1px;font-size:36.2px;line-height:43.4px;color:#111827;font-weight:700;letter-spacing:1.52px;">$12.47</div></div><div id="topo"><svg class="ic" style="width:46px;height:46px;position:absolute;left:35px;top:32px" viewBox="0 0 24 24" fill="#1e293b"><g stroke="#1e293b" stroke-width="1.7"><line x1="12" y1="12.2" x2="12" y2="3"/><line x1="12" y1="12.2" x2="3" y2="9.5"/><line x1="12" y1="12.2" x2="21" y2="9.5"/><line x1="12" y1="12.2" x2="6" y2="20"/><line x1="12" y1="12.2" x2="18" y2="20"/></g><circle cx="12" cy="3" r="3"/><circle cx="3" cy="9.5" r="3"/><circle cx="21" cy="9.5" r="3"/><circle cx="6" cy="20" r="3"/><circle cx="18" cy="20" r="3"/><circle cx="12" cy="12.2" r="4.6"/></svg><div class="tx" style="left:144.6px;top:30.7px;font-size:38.4px;line-height:46.1px;color:#1e293b;">Agent Network Topology</div><div class="tx" style="left:144.6px;top:75.1px;font-size:28.5px;line-height:34.2px;color:#111;">Live Kubernetes pod status and inter-agent communication</div><div id="bigc"><svg class="ic" style="width:56px;height:56px;position:absolute;left:96px;top:40.5px" viewBox="0 0 24 24" fill="#fff"><g stroke="#fff" stroke-width="1.7"><line x1="12" y1="12.2" x2="12" y2="3"/><line x1="12" y1="12.2" x2="3" y2="9.5"/><line x1="12" y1="12.2" x2="21" y2="9.5"/><line x1="12" y1="12.2" x2="6" y2="20"/><line x1="12" y1="12.2" x2="18" y2="20"/></g><circle cx="12" cy="3" r="3"/><circle cx="3" cy="9.5" r="3"/><circle cx="21" cy="9.5" r="3"/><circle cx="6" cy="20" r="3"/><circle cx="18" cy="20" r="3"/><circle cx="12" cy="12.2" r="4.6"/></svg><div class="tx" style="left:43.8px;top:109.9px;font-size:20px;line-height:24.0px;color:#fff;-webkit-text-stroke:0.33px currentColor;letter-spacing:0.31px;">Master</div><div class="tx" style="left:43.8px;top:142.4px;font-size:19.8px;line-height:23.8px;color:#fff;-webkit-text-stroke:0.33px currentColor;letter-spacing:0.42px;">Orchestrator</div><div id="sset"></div><div class="tx mono" style="left:124.0px;top:181.8px;font-size:14.8px;line-height:17.8px;color:#fff;font-weight:700;transform:translateX(-50%);letter-spacing:0px;">StatefulSet-0</div></div><svg style="position:absolute;left:871.5px;top:463.0px;width:600px;height:121px;overflow:visible" viewBox="0 0 600 121"><defs><linearGradient id="lg" gradientUnits="userSpaceOnUse" x1="0" y1="0" x2="0" y2="120.5"><stop offset="0" stop-color="#1976d2" stop-opacity=".15"/><stop offset=".45" stop-color="#1976d2" stop-opacity=".55"/><stop offset="1" stop-color="#1976d2" stop-opacity=".1"/></linearGradient></defs><g stroke="url(#lg)" stroke-width="2.2" fill="none"><line x1="300" y1="0" x2="0" y2="120.5"/><line x1="300" y1="0" x2="120" y2="120.5"/><line x1="300" y1="0" x2="240" y2="120.5"/><line x1="300" y1="0" x2="360" y2="120.5"/><line x1="300" y1="0" x2="480" y2="120.5"/><line x1="300" y1="0" x2="600" y2="120.5"/></g></svg><div class="ag on" style="left:80.0px;top:614.8px;width:707.0px;height:347.7px"><div class="circ" style="background:#1976d2;top:32px"><svg class="ic" style="width:48px;height:48px;" viewBox="0 0 24 24" fill="#fff"><g stroke="#fff" stroke-width="1.7"><line x1="12" y1="12.2" x2="12" y2="3"/><line x1="12" y1="12.2" x2="3" y2="9.5"/><line x1="12" y1="12.2" x2="21" y2="9.5"/><line x1="12" y1="12.2" x2="6" y2="20"/><line x1="12" y1="12.2" x2="18" y2="20"/></g><circle cx="12" cy="3" r="3"/><circle cx="3" cy="9.5" r="3"/><circle cx="21" cy="9.5" r="3"/><circle cx="6" cy="20" r="3"/><circle cx="18" cy="20" r="3"/><circle cx="12" cy="12.2" r="4.6"/></svg></div><div class="tx" style="left:350.0px;top:140.8px;font-size:23.9px;line-height:28.7px;color:#1e293b;font-weight:700;transform:translateX(-50%);letter-spacing:-0.41px;">Master Orchestrator</div><div class="podchip" style="top:183.5px"></div><div class="tx mono" style="left:350.0px;top:193.5px;font-size:16.7px;line-height:20.0px;color:#555;transform:translateX(-50%);letter-spacing:0px;">pod-ator</div><div style="position:absolute;left:0;right:0;top:240px;height:24px;display:flex;justify-content:center;align-items:center;color:#666;font-size:20.5px;white-space:nowrap"><svg class="ic" style="width:24px;height:24px;" viewBox="0 0 24 24" fill="#616161"><path d="M15 9H9v6h6V9zm-2 4h-2v-2h2v2zm8-2V9h-2V7c0-1.1-.9-2-2-2h-2V3h-2v2h-2V3H9v2H7c-1.1 0-2 .9-2 2v2H3v2h2v2H3v2h2v2c0 1.1.9 2 2 2h2v2h2v-2h2v2h2v-2h2c1.1 0 2-.9 2-2v-2h2v-2h-2v-2h2zm-4 6H7V7h10v10z"/></svg><span style="margin:0 16.5px 0 4.8px;letter-spacing:0.86px">62%</span><svg class="ic" style="width:24px;height:24px;" viewBox="0 0 24 24" fill="#616161"><path d="M18 2h-8L4.02 8 4 20c0 1.1.9 2 2 2h12c1.1 0 2-.9 2-2V4c0-1.1-.9-2-2-2zm-6 6h-2V4h2v4zm3 0h-2V4h2v4zm3 0h-2V4h2v4z"/></svg><span style="margin-left:4.4px;letter-spacing:0.62px">1927Mi</span></div><div class="tx" style="left:350.0px;top:281.1px;font-size:20px;line-height:24.0px;color:#666;-webkit-text-stroke:0.33px currentColor;transform:translateX(-50%);letter-spacing:-0.52px;">REASONING</div></div><div class="gdot" style="left:768.9px;top:612.5px"></div><div class="sdot" style="left:752.2px;top:635.8px;background:#6ea8e8"></div><div class="ag off" style="left:820.3px;top:615.2px;width:703.7px;height:346.5px"><div class="circ" style="background:#7b1fa2;top:32.5px"><svg class="ic" style="width:48px;height:48px;" viewBox="0 0 24 24" fill="#fff"><path d="M17 10H7v2h10v-2zm2-7h-1V1h-2v2H8V1H6v2H5c-1.11 0-1.99.9-1.99 2L3 19c0 1.1.89 2 2 2h14c1.1 0 2-.9 2-2V5c0-1.1-.9-2-2-2zm0 16H5V8h14v11zm-5-5H7v2h7v-2z"/></svg></div><div class="tx" style="left:349.9px;top:141.3px;font-size:23.9px;line-height:28.7px;color:#1e293b;font-weight:700;transform:translateX(-50%);letter-spacing:-0.36px;">Strategic Planner</div><div class="podchip" style="top:184.0px"></div><div class="tx mono" style="left:349.9px;top:194.0px;font-size:16.7px;line-height:20.0px;color:#555;transform:translateX(-50%);letter-spacing:0px;">pod-nner</div><div style="position:absolute;left:0;right:0;top:240.5px;height:24px;display:flex;justify-content:center;align-items:center;color:#666;font-size:20.5px;white-space:nowrap"><svg class="ic" style="width:24px;height:24px;" viewBox="0 0 24 24" fill="#616161"><path d="M15 9H9v6h6V9zm-2 4h-2v-2h2v2zm8-2V9h-2V7c0-1.1-.9-2-2-2h-2V3h-2v2h-2V3H9v2H7c-1.1 0-2 .9-2 2v2H3v2h2v2H3v2h2v2c0 1.1.9 2 2 2h2v2h2v-2h2v2h2v-2h2c1.1 0 2-.9 2-2v-2h2v-2h-2v-2h2zm-4 6H7V7h10v10z"/></svg><span style="margin:0 16.5px 0 4.8px;letter-spacing:0.86px">15%</span><svg class="ic" style="width:24px;height:24px;" viewBox="0 0 24 24" fill="#616161"><path d="M18 2h-8L4.02 8 4 20c0 1.1.9 2 2 2h12c1.1 0 2-.9 2-2V4c0-1.1-.9-2-2-2zm-6 6h-2V4h2v4zm3 0h-2V4h2v4zm3 0h-2V4h2v4z"/></svg><span style="margin-left:4.4px;letter-spacing:0.62px">1016Mi</span></div><div class="tx" style="left:349.9px;top:281.6px;font-size:20px;line-height:24.0px;color:#666;-webkit-text-stroke:0.33px currentColor;transform:translateX(-50%);letter-spacing:-1.09px;">COMPLETED</div></div><div class="sdot" style="left:1489.2px;top:636.2px;background:#4caf50"></div><div class="ag on" style="left:1556.7px;top:614.8px;width:707.2px;height:347.7px"><div class="circ" style="background:#388e3c;top:32px"><svg class="ic" style="width:48px;height:48px;" viewBox="0 0 24 24" fill="#fff"><path d="M13 8.57c-.79 0-1.43.64-1.43 1.43s.64 1.43 1.43 1.43 1.43-.64 1.43-1.43-.64-1.43-1.43-1.43zM13 3C9.25 3 6.2 5.94 6.02 9.64L4.1 12.2c-.25.33-.01.8.4.8H6v3c0 1.1.9 2 2 2h1v3h7v-4.68c2.36-1.12 4-3.53 4-6.32 0-3.87-3.13-7-7-7zm3 7c0 .13-.01.26-.02.39l.83.66c.08.06.1.16.05.25l-.8 1.39c-.05.09-.16.12-.24.09l-.99-.4c-.21.16-.43.29-.67.39L14 13.83c-.01.1-.1.17-.2.17h-1.6c-.1 0-.18-.07-.2-.17l-.15-1.06c-.25-.1-.47-.23-.68-.39l-.99.4c-.09.03-.2 0-.25-.09l-.8-1.39c-.05-.08-.03-.19.05-.25l.84-.66c-.01-.13-.02-.26-.02-.39s.02-.27.04-.39l-.85-.66c-.08-.06-.1-.16-.05-.26l.8-1.38c.05-.09.15-.12.24-.09l1 .4c.2-.15.43-.29.67-.39L12 6.17c.02-.1.1-.17.2-.17h1.6c.1 0 .18.07.2.17l.15 1.06c.24.1.46.23.67.39l1-.4c.09-.03.2 0 .24.09l.8 1.38c.05.09.03.2-.05.26l-.85.66c.03.12.04.25.04.39z"/></svg></div><div class="tx" style="left:350.1px;top:140.8px;font-size:23.9px;line-height:28.7px;color:#1e293b;font-weight:700;transform:translateX(-50%);letter-spacing:-0.55px;">Terminology Guardian</div><div class="podchip" style="top:183.5px"></div><div class="tx mono" style="left:350.1px;top:193.5px;font-size:16.7px;line-height:20.0px;color:#555;transform:translateX(-50%);letter-spacing:0px;">pod-logy</div><div style="position:absolute;left:0;right:0;top:240px;height:24px;display:flex;justify-content:center;align-items:center;color:#666;font-size:20.5px;white-space:nowrap"><svg class="ic" style="width:24px;height:24px;" viewBox="0 0 24 24" fill="#616161"><path d="M15 9H9v6h6V9zm-2 4h-2v-2h2v2zm8-2V9h-2V7c0-1.1-.9-2-2-2h-2V3h-2v2h-2V3H9v2H7c-1.1 0-2 .9-2 2v2H3v2h2v2H3v2h2v2c0 1.1.9 2 2 2h2v2h2v-2h2v2h2v-2h2c1.1 0 2-.9 2-2v-2h2v-2h-2v-2h2zm-4 6H7V7h10v10z"/></svg><span style="margin:0 16.5px 0 4.8px;letter-spacing:0.86px">35%</span><svg class="ic" style="width:24px;height:24px;" viewBox="0 0 24 24" fill="#616161"><path d="M18 2h-8L4.02 8 4 20c0 1.1.9 2 2 2h12c1.1 0 2-.9 2-2V4c0-1.1-.9-2-2-2zm-6 6h-2V4h2v4zm3 0h-2V4h2v4zm3 0h-2V4h2v4z"/></svg><span style="margin-left:4.4px;letter-spacing:0.62px">1886Mi</span></div><div class="tx" style="left:350.1px;top:281.1px;font-size:20px;line-height:24.0px;color:#666;-webkit-text-stroke:0.33px currentColor;transform:translateX(-50%);letter-spacing:-0.82px;">EXECUTING_TOOL</div></div><div class="gdot" style="left:2245.8px;top:612.5px"></div><div class="sdot" style="left:2229.1px;top:635.8px;background:#ffcc80"></div><div class="ag on" style="left:80.0px;top:994.7px;width:707.0px;height:347.7px"><div class="circ" style="background:#f57c00;top:32px"><svg class="ic" style="width:48px;height:48px;" viewBox="0 0 24 24" fill="#fff"><path d="m23 12-2.44-2.79.34-3.69-3.61-.82-1.89-3.2L12 2.96 8.6 1.5 6.71 4.69 3.1 5.5l.34 3.7L1 12l2.44 2.79-.34 3.7 3.61.82L8.6 22.5l3.4-1.47 3.4 1.46 1.89-3.19 3.61-.82-.34-3.69L23 12zm-12.91 4.72-3.8-3.81 1.48-1.48 2.32 2.33 5.85-5.87 1.48 1.48-7.33 7.35z"/></svg></div><div class="tx" style="left:350.0px;top:140.8px;font-size:23.9px;line-height:28.7px;color:#1e293b;font-weight:700;transform:translateX(-50%);letter-spacing:-0.62px;">Technical QA Agent</div><div class="podchip" style="top:183.5px"></div><div class="tx mono" style="left:350.0px;top:193.5px;font-size:16.7px;line-height:20.0px;color:#555;transform:translateX(-50%);letter-spacing:0px;">pod-ical</div><div style="position:absolute;left:0;right:0;top:240px;height:24px;display:flex;justify-content:center;align-items:center;color:#666;font-size:20.5px;white-space:nowrap"><svg class="ic" style="width:24px;height:24px;" viewBox="0 0 24 24" fill="#616161"><path d="M15 9H9v6h6V9zm-2 4h-2v-2h2v2zm8-2V9h-2V7c0-1.1-.9-2-2-2h-2V3h-2v2h-2V3H9v2H7c-1.1 0-2 .9-2 2v2H3v2h2v2H3v2h2v2c0 1.1.9 2 2 2h2v2h2v-2h2v2h2v-2h2c1.1 0 2-.9 2-2v-2h2v-2h-2v-2h2zm-4 6H7V7h10v10z"/></svg><span style="margin:0 16.5px 0 4.8px;letter-spacing:0.86px">47%</span><svg class="ic" style="width:24px;height:24px;" viewBox="0 0 24 24" fill="#616161"><path d="M18 2h-8L4.02 8 4 20c0 1.1.9 2 2 2h12c1.1 0 2-.9 2-2V4c0-1.1-.9-2-2-2zm-6 6h-2V4h2v4zm3 0h-2V4h2v4zm3 0h-2V4h2v4z"/></svg><span style="margin-left:4.4px;letter-spacing:0.62px">1739Mi</span></div><div class="tx" style="left:350.0px;top:281.1px;font-size:20px;line-height:24.0px;color:#666;-webkit-text-stroke:0.33px currentColor;transform:translateX(-50%);letter-spacing:-0.52px;">REASONING</div></div><div class="gdot" style="left:768.9px;top:992.4px"></div><div class="sdot" style="left:752.2px;top:1015.7px;background:#6ea8e8"></div><div class="ag on" style="left:819.6px;top:994.7px;width:705.2px;height:347.7px"><div class="circ" style="background:#f57c00;top:32px"><svg class="ic" style="width:48px;height:48px;" viewBox="0 0 24 24" fill="#fff"><path d="m23 12-2.44-2.79.34-3.69-3.61-.82-1.89-3.2L12 2.96 8.6 1.5 6.71 4.69 3.1 5.5l.34 3.7L1 12l2.44 2.79-.34 3.7 3.61.82L8.6 22.5l3.4-1.47 3.4 1.46 1.89-3.19 3.61-.82-.34-3.69L23 12zm-12.91 4.72-3.8-3.81 1.48-1.48 2.32 2.33 5.85-5.87 1.48 1.48-7.33 7.35z"/></svg></div><div class="tx" style="left:349.1px;top:140.8px;font-size:23.9px;line-height:28.7px;color:#1e293b;font-weight:700;transform:translateX(-50%);letter-spacing:-0.77px;">Linguistic QA Agent</div><div class="podchip" style="top:183.5px"></div><div class="tx mono" style="left:349.1px;top:193.5px;font-size:16.7px;line-height:20.0px;color:#555;transform:translateX(-50%);letter-spacing:0px;">pod-stic</div><div style="position:absolute;left:0;right:0;top:240px;height:24px;display:flex;justify-content:center;align-items:center;color:#666;font-size:20.5px;white-space:nowrap"><svg class="ic" style="width:24px;height:24px;" viewBox="0 0 24 24" fill="#616161"><path d="M15 9H9v6h6V9zm-2 4h-2v-2h2v2zm8-2V9h-2V7c0-1.1-.9-2-2-2h-2V3h-2v2h-2V3H9v2H7c-1.1 0-2 .9-2 2v2H3v2h2v2H3v2h2v2c0 1.1.9 2 2 2h2v2h2v-2h2v2h2v-2h2c1.1 0 2-.9 2-2v-2h2v-2h-2v-2h2zm-4 6H7V7h10v10z"/></svg><span style="margin:0 16.5px 0 4.8px;letter-spacing:0.86px">31%</span><svg class="ic" style="width:24px;height:24px;" viewBox="0 0 24 24" fill="#616161"><path d="M18 2h-8L4.02 8 4 20c0 1.1.9 2 2 2h12c1.1 0 2-.9 2-2V4c0-1.1-.9-2-2-2zm-6 6h-2V4h2v4zm3 0h-2V4h2v4zm3 0h-2V4h2v4z"/></svg><span style="margin-left:4.4px;letter-spacing:0.62px">1872Mi</span></div><div class="tx" style="left:349.1px;top:281.1px;font-size:20px;line-height:24.0px;color:#666;-webkit-text-stroke:0.33px currentColor;transform:translateX(-50%);letter-spacing:-0.52px;">REASONING</div></div><div class="gdot" style="left:1506.7px;top:992.4px"></div><div class="sdot" style="left:1490.0px;top:1015.7px;background:#6ea8e8"></div><div class="ag off" style="left:1557.4px;top:995.1px;width:705.7px;height:346.5px"><div class="circ" style="background:#388e3c;top:32.5px"><svg class="ic" style="width:48px;height:48px;" viewBox="0 0 24 24" fill="#fff"><path d="M13 8.57c-.79 0-1.43.64-1.43 1.43s.64 1.43 1.43 1.43 1.43-.64 1.43-1.43-.64-1.43-1.43-1.43zM13 3C9.25 3 6.2 5.94 6.02 9.64L4.1 12.2c-.25.33-.01.8.4.8H6v3c0 1.1.9 2 2 2h1v3h7v-4.68c2.36-1.12 4-3.53 4-6.32 0-3.87-3.13-7-7-7zm3 7c0 .13-.01.26-.02.39l.83.66c.08.06.1.16.05.25l-.8 1.39c-.05.09-.16.12-.24.09l-.99-.4c-.21.16-.43.29-.67.39L14 13.83c-.01.1-.1.17-.2.17h-1.6c-.1 0-.18-.07-.2-.17l-.15-1.06c-.25-.1-.47-.23-.68-.39l-.99.4c-.09.03-.2 0-.25-.09l-.8-1.39c-.05-.08-.03-.19.05-.25l.84-.66c-.01-.13-.02-.26-.02-.39s.02-.27.04-.39l-.85-.66c-.08-.06-.1-.16-.05-.26l.8-1.38c.05-.09.15-.12.24-.09l1 .4c.2-.15.43-.29.67-.39L12 6.17c.02-.1.1-.17.2-.17h1.6c.1 0 .18.07.2.17l.15 1.06c.24.1.46.23.67.39l1-.4c.09-.03.2 0 .24.09l.8 1.38c.05.09.03.2-.05.26l-.85.66c.03.12.04.25.04.39z"/></svg></div><div class="tx" style="left:350.8px;top:141.3px;font-size:23.9px;line-height:28.7px;color:#1e293b;font-weight:700;transform:translateX(-50%);letter-spacing:-0.33px;">Cultural Adaptation Agent</div><div class="podchip" style="top:184.0px"></div><div class="tx mono" style="left:350.8px;top:194.0px;font-size:16.7px;line-height:20.0px;color:#555;transform:translateX(-50%);letter-spacing:0px;">pod-ural</div><div style="position:absolute;left:0;right:0;top:240.5px;height:24px;display:flex;justify-content:center;align-items:center;color:#666;font-size:20.5px;white-space:nowrap"><svg class="ic" style="width:24px;height:24px;" viewBox="0 0 24 24" fill="#616161"><path d="M15 9H9v6h6V9zm-2 4h-2v-2h2v2zm8-2V9h-2V7c0-1.1-.9-2-2-2h-2V3h-2v2h-2V3H9v2H7c-1.1 0-2 .9-2 2v2H3v2h2v2H3v2h2v2c0 1.1.9 2 2 2h2v2h2v-2h2v2h2v-2h2c1.1 0 2-.9 2-2v-2h2v-2h-2v-2h2zm-4 6H7V7h10v10z"/></svg><span style="margin:0 16.5px 0 4.8px;letter-spacing:1.36px">11%</span><svg class="ic" style="width:24px;height:24px;" viewBox="0 0 24 24" fill="#616161"><path d="M18 2h-8L4.02 8 4 20c0 1.1.9 2 2 2h12c1.1 0 2-.9 2-2V4c0-1.1-.9-2-2-2zm-6 6h-2V4h2v4zm3 0h-2V4h2v4zm3 0h-2V4h2v4z"/></svg><span style="margin-left:4.4px;letter-spacing:0.62px">1005Mi</span></div><div class="tx" style="left:350.8px;top:281.6px;font-size:20px;line-height:24.0px;color:#666;-webkit-text-stroke:0.33px currentColor;transform:translateX(-50%);letter-spacing:-0.11px;">IDLE</div></div><div class="sdot" style="left:2228.3px;top:1016.1px;background:#9e9e9e"></div><div id="strip"><svg class="ic" style="width:48px;height:48px;position:absolute;left:208.5px;top:54.2px" viewBox="0 0 24 24" fill="#1976d2"><path d="M6.99 11 3 15l3.99 4v-3H14v-2H6.99v-3zM21 9l-3.99-4v3H10v2h7.01v3L21 9z"/></svg><div class="tx" style="left:281.0px;top:38.1px;font-size:36px;line-height:43.2px;color:#111827;font-weight:700;letter-spacing:1.58px;">16</div><svg class="ic" style="width:48px;height:48px;position:absolute;left:736.0px;top:54.2px" viewBox="0 0 24 24" fill="#1976d2"><path d="M20 10a2 2 0 1 0 0 4 2 2 0 0 0 0-4zM4 10a2 2 0 1 0 0 4 2 2 0 0 0 0-4zM12 18a2 2 0 1 0 0 4 2 2 0 0 0 0-4zM12 2a2 2 0 1 0 0 4 2 2 0 0 0 0-4zM10.05 8.59 6.03 4.55h-.01l-.31-.32-1.42 1.41 4.02 4.05.01-.01.31.32zm3.893.027 4.405-4.392L19.76 5.64l-4.405 4.393zM10.01 15.36l-1.42-1.41-4.03 4.01-.32.33 1.41 1.41 4.03-4.02zm9.75 2.94-3.99-4.01-.36-.35L14 15.35l3.99 4.01.35.35z"/></svg><div class="tx" style="left:808.5px;top:38.1px;font-size:36px;line-height:43.2px;color:#111827;font-weight:700;letter-spacing:1.58px;">8</div><svg class="ic" style="width:48px;height:48px;position:absolute;left:1286.7px;top:54.2px" viewBox="0 0 24 24" fill="#1976d2"><path d="M2 20h20v-4H2v4zm2-3h2v2H4v-2zM2 4v4h20V4H2zm4 3H4V5h2v2zm-4 7h20v-4H2v4zm2-3h2v2H4v-2z"/></svg><div class="tx" style="left:1358.5px;top:38.1px;font-size:36px;line-height:43.2px;color:#111827;font-weight:700;letter-spacing:1.58px;">18</div><svg class="ic" style="width:48px;height:48px;position:absolute;left:1855.5px;top:54.2px" viewBox="0 0 24 24" fill="#1976d2"><path d="m19 8-4 4h3c0 3.31-2.69 6-6 6-1.01 0-1.97-.25-2.8-.7l-1.46 1.46C8.97 19.54 10.43 20 12 20c4.42 0 8-3.58 8-8h3l-4-4zM6 12c0-3.31 2.69-6 6-6 1.01 0 1.97.25 2.8.7l1.46-1.46C15.03 4.46 13.57 4 12 4c-4.42 0-8 3.58-8 8H1l4 4 4-4H6z"/></svg><div class="tx" style="left:1927.5px;top:38.1px;font-size:36px;line-height:43.2px;color:#111827;font-weight:700;letter-spacing:2.07px;">97%</div></div></div><div id="act"><svg class="ic" style="width:48px;height:48px;position:absolute;left:32px;top:31px" viewBox="0 0 24 24" fill="#1e293b"><path d="M20 10a2 2 0 1 0 0 4 2 2 0 0 0 0-4zM4 10a2 2 0 1 0 0 4 2 2 0 0 0 0-4zM12 18a2 2 0 1 0 0 4 2 2 0 0 0 0-4zM12 2a2 2 0 1 0 0 4 2 2 0 0 0 0-4zM10.05 8.59 6.03 4.55h-.01l-.31-.32-1.42 1.41 4.02 4.05.01-.01.31.32zm3.893.027 4.405-4.392L19.76 5.64l-4.405 4.393zM10.01 15.36l-1.42-1.41-4.03 4.01-.32.33 1.41 1.41 4.03-4.02zm9.75 2.94-3.99-4.01-.36-.35L14 15.35l3.99 4.01.35.35z"/></svg><div class="tx" style="left:144.3px;top:30.7px;font-size:38.4px;line-height:46.1px;color:#1e293b;">Live Activity Stream</div><div class="tx" style="left:144.3px;top:75.1px;font-size:28.5px;line-height:34.2px;color:#111;">Real-time Kafka event stream from agent-events topic</div><div class="ev" style="top:142.8px;height:190.6px;border-left-color:#1976d2;background:#f9f9fb"><div class="tx" style="left:83.5px;top:29.5px;font-size:22px;line-height:26.4px;color:#1e293b;font-weight:700;transform:translateX(-50%);letter-spacing:0.65px;">16:10:33</div><div class="msgid mono" style="top:63.4px;height:22px;left:4.0px"><svg class="ic" style="width:17px;height:17px;margin-right:6px" viewBox="0 0 24 24" fill="none" stroke="#9c9c9c" stroke-width="1.5" stroke-linecap="round"><path d="M2.4 18.0V13.5a9.6 9.6 0 0 1 19.2 0v4.5"/><path d="M5.0 21.0V13.5a7.0 7.0 0 0 1 14.0 0v7.5"/><path d="M7.6 21.0V13.5a4.4 4.4 0 0 1 8.8 0v7.5"/><path d="M10.2 20.0V13.5a1.8 1.8 0 0 1 3.6 0v6.5"/><path d="M5.5 3.4C7.5 2.2 9.7 1.6 12 1.6s4.5.6 6.5 1.8"/></svg><span>msg-1767</span></div><div class="cir" style="background:#1976d2;left:167.2px"><svg class="ic" style="width:34px;height:34px;margin-left:3px" viewBox="0 0 24 24" fill="#fff"><path d="M2.01 21 23 12 2.01 3 2 10l15 2-15 2z"/></svg></div><div class="row" style="top:32.1px;left:256.3px;line-height:32px"><span style="font-size:23.9px;font-weight:700;color:#1e293b;letter-spacing:-0.43px">Master Orchestrator</span><svg class="ic" style="width:28px;height:28px;margin:-7.5px 27.6px 0 7.8px" viewBox="0 0 24 24" fill="#9e9e9e"><path d="m12 4-1.41 1.41L16.17 11H4v2h12.17l-5.58 5.59L12 20l8-8z"/></svg><span style="font-size:24px;color:#6b7280;letter-spacing:0.29px">Cultural Adaptation Agent</span></div><div class="tx" style="left:256.3px;top:86.3px;font-size:24px;line-height:28.8px;color:#374151;letter-spacing:0.22px;">Quality check results for recent translations</div><svg class="ic" style="width:24px;height:24px;position:absolute;left:255.1px;top:140.3px" viewBox="0 0 24 24" fill="#555"><path d="M9 1h6v2H9zm10.03 6.39 1.42-1.42c-.43-.51-.9-.99-1.41-1.41l-1.42 1.42C16.07 4.74 14.12 4 12 4c-4.97 0-9 4.03-9 9s4.02 9 9 9 9-4.03 9-9c0-2.12-.74-4.07-1.97-5.61zM13 14h-2V8h2v6z"/></svg><div class="tx" style="left:284.6px;top:140.3px;font-size:20.5px;line-height:24.6px;color:#757575;letter-spacing:0.59px;">50ms</div></div><div class="ev" style="top:349.4px;height:190.6px;border-left-color:#1976d2;background:#f9f9fb"><div class="tx" style="left:83.5px;top:29.5px;font-size:22px;line-height:26.4px;color:#1e293b;font-weight:700;transform:translateX(-50%);letter-spacing:0.65px;">16:10:25</div><div class="msgid mono" style="top:63.4px;height:22px;left:4.0px"><svg class="ic" style="width:17px;height:17px;margin-right:6px" viewBox="0 0 24 24" fill="none" stroke="#9c9c9c" stroke-width="1.5" stroke-linecap="round"><path d="M2.4 18.0V13.5a9.6 9.6 0 0 1 19.2 0v4.5"/><path d="M5.0 21.0V13.5a7.0 7.0 0 0 1 14.0 0v7.5"/><path d="M7.6 21.0V13.5a4.4 4.4 0 0 1 8.8 0v7.5"/><path d="M10.2 20.0V13.5a1.8 1.8 0 0 1 3.6 0v6.5"/><path d="M5.5 3.4C7.5 2.2 9.7 1.6 12 1.6s4.5.6 6.5 1.8"/></svg><span>msg-1767</span></div><div class="cir" style="background:#1976d2;left:167.2px"><svg class="ic" style="width:34px;height:34px;margin-left:3px" viewBox="0 0 24 24" fill="#fff"><path d="M2.01 21 23 12 2.01 3 2 10l15 2-15 2z"/></svg></div><div class="row" style="top:32.1px;left:256.3px;line-height:32px"><span style="font-size:23.9px;font-weight:700;color:#1e293b;letter-spacing:-0.79px">Linguistic QA Agent</span><svg class="ic" style="width:28px;height:28px;margin:-7.5px 27.6px 0 7.8px" viewBox="0 0 24 24" fill="#9e9e9e"><path d="m12 4-1.41 1.41L16.17 11H4v2h12.17l-5.58 5.59L12 20l8-8z"/></svg><span style="font-size:24px;color:#6b7280;letter-spacing:0.1px">Terminology Guardian</span></div><div class="tx" style="left:256.3px;top:86.3px;font-size:24px;line-height:28.8px;color:#374151;letter-spacing:0.22px;">Resource allocation adjustment recommendation</div><svg class="ic" style="width:24px;height:24px;position:absolute;left:255.1px;top:140.3px" viewBox="0 0 24 24" fill="#555"><path d="M9 1h6v2H9zm10.03 6.39 1.42-1.42c-.43-.51-.9-.99-1.41-1.41l-1.42 1.42C16.07 4.74 14.12 4 12 4c-4.97 0-9 4.03-9 9s4.02 9 9 9 9-4.03 9-9c0-2.12-.74-4.07-1.97-5.61zM13 14h-2V8h2v6z"/></svg><div class="tx" style="left:284.6px;top:140.3px;font-size:20.5px;line-height:24.6px;color:#757575;letter-spacing:0.59px;">14ms</div></div><div class="ev" style="top:556.0px;height:229px;border-left-color:#1976d2;background:#f9f9fb"><div class="tx" style="left:83.5px;top:29.5px;font-size:22px;line-height:26.4px;color:#1e293b;font-weight:700;transform:translateX(-50%);letter-spacing:0.65px;">16:08:23</div><div class="msgid mono" style="top:63.4px;height:22px;left:4.0px"><svg class="ic" style="width:17px;height:17px;margin-right:6px" viewBox="0 0 24 24" fill="none" stroke="#9c9c9c" stroke-width="1.5" stroke-linecap="round"><path d="M2.4 18.0V13.5a9.6 9.6 0 0 1 19.2 0v4.5"/><path d="M5.0 21.0V13.5a7.0 7.0 0 0 1 14.0 0v7.5"/><path d="M7.6 21.0V13.5a4.4 4.4 0 0 1 8.8 0v7.5"/><path d="M10.2 20.0V13.5a1.8 1.8 0 0 1 3.6 0v6.5"/><path d="M5.5 3.4C7.5 2.2 9.7 1.6 12 1.6s4.5.6 6.5 1.8"/></svg><span>msg-006</span></div><div class="cir" style="background:#9c27b0;left:167.2px"><svg class="ic" style="width:32px;height:32px;" viewBox="0 0 24 24" fill="#fff"><path d="M18 11v2h4v-2h-4zm-2 6.61c.96.71 2.21 1.65 3.2 2.39.4-.53.8-1.07 1.2-1.6-.99-.74-2.24-1.68-3.2-2.4-.4.54-.8 1.08-1.2 1.61zM20.4 5.6c-.4-.53-.8-1.07-1.2-1.6-.99.74-2.24 1.68-3.2 2.4.4.53.8 1.07 1.2 1.6.96-.72 2.21-1.65 3.2-2.4zM4 9c-1.1 0-2 .9-2 2v2c0 1.1.9 2 2 2h1v4h2v-4h1l5 3V6L8 9H4zm11.5 3c0-1.33-.58-2.53-1.5-3.35v6.69c.92-.81 1.5-2.01 1.5-3.34z"/></svg></div><div class="row" style="top:32.1px;left:256.3px;line-height:32px"><span style="font-size:23.9px;font-weight:700;color:#1e293b;letter-spacing:-0.58px">Terminology Guardian</span><svg class="ic" style="width:28px;height:28px;margin:-7.5px 27.6px 0 7.8px" viewBox="0 0 24 24" fill="#9e9e9e"><path d="m12 4-1.41 1.41L16.17 11H4v2h12.17l-5.58 5.59L12 20l8-8z"/></svg><span style="font-size:24px;color:#6b7280;letter-spacing:0.16px">Master Orchestrator</span></div><div class="tx" style="left:256.3px;top:86.3px;font-size:24px;line-height:28.8px;color:#374151;letter-spacing:0.18px;">Terminology consistency check complete: 99.2% across</div><div class="tx" style="left:256.3px;top:124.7px;font-size:24px;line-height:28.8px;color:#374151;letter-spacing:-0.05px;">all languages</div><svg class="ic" style="width:24px;height:24px;position:absolute;left:255.1px;top:178.7px" viewBox="0 0 24 24" fill="#555"><path d="M9 1h6v2H9zm10.03 6.39 1.42-1.42c-.43-.51-.9-.99-1.41-1.41l-1.42 1.42C16.07 4.74 14.12 4 12 4c-4.97 0-9 4.03-9 9s4.02 9 9 9 9-4.03 9-9c0-2.12-.74-4.07-1.97-5.61zM13 14h-2V8h2v6z"/></svg><div class="tx" style="left:284.6px;top:178.7px;font-size:20.5px;line-height:24.6px;color:#757575;letter-spacing:0.59px;">35ms</div></div><div class="ev" style="top:801.0px;height:229px;border-left-color:#f59e0b;background:#fff8e1"><div class="tx" style="left:83.5px;top:29.5px;font-size:22px;line-height:26.4px;color:#1e293b;font-weight:700;transform:translateX(-50%);letter-spacing:0.65px;">16:00:23</div><div class="msgid mono" style="top:63.4px;height:22px;left:4.0px"><svg class="ic" style="width:17px;height:17px;margin-right:6px" viewBox="0 0 24 24" fill="none" stroke="#9c9c9c" stroke-width="1.5" stroke-linecap="round"><path d="M2.4 18.0V13.5a9.6 9.6 0 0 1 19.2 0v4.5"/><path d="M5.0 21.0V13.5a7.0 7.0 0 0 1 14.0 0v7.5"/><path d="M7.6 21.0V13.5a4.4 4.4 0 0 1 8.8 0v7.5"/><path d="M10.2 20.0V13.5a1.8 1.8 0 0 1 3.6 0v6.5"/><path d="M5.5 3.4C7.5 2.2 9.7 1.6 12 1.6s4.5.6 6.5 1.8"/></svg><span>msg-005</span></div><div class="cir" style="background:#ff9800;left:167.2px"><svg class="ic" style="width:32px;height:32px;" viewBox="0 0 24 24" fill="#fff"><path d="M6.99 11 3 15l3.99 4v-3H14v-2H6.99v-3zM21 9l-3.99-4v3H10v2h7.01v3L21 9z"/></svg></div><div class="row" style="top:32.1px;left:256.3px;line-height:32px"><span style="font-size:23.9px;font-weight:700;color:#1e293b;letter-spacing:-0.43px">Master Orchestrator</span><svg class="ic" style="width:28px;height:28px;margin:-7.5px 27.6px 0 7.8px" viewBox="0 0 24 24" fill="#9e9e9e"><path d="m12 4-1.41 1.41L16.17 11H4v2h12.17l-5.58 5.59L12 20l8-8z"/></svg><span style="font-size:24px;color:#6b7280;letter-spacing:0.29px">Cultural Adaptation Agent</span></div><div class="tx" style="left:256.3px;top:86.3px;font-size:24px;line-height:28.8px;color:#374151;letter-spacing:0.06px;">Cultural review required for Japanese Episode 5</div><div class="tx" style="left:256.3px;top:124.7px;font-size:24px;line-height:28.8px;color:#374151;letter-spacing:0.17px;">segments</div><svg class="ic" style="width:24px;height:24px;position:absolute;left:255.1px;top:178.7px" viewBox="0 0 24 24" fill="#555"><path d="M9 1h6v2H9zm10.03 6.39 1.42-1.42c-.43-.51-.9-.99-1.41-1.41l-1.42 1.42C16.07 4.74 14.12 4 12 4c-4.97 0-9 4.03-9 9s4.02 9 9 9 9-4.03 9-9c0-2.12-.74-4.07-1.97-5.61zM13 14h-2V8h2v6z"/></svg><div class="tx" style="left:284.6px;top:178.7px;font-size:20.5px;line-height:24.6px;color:#757575;letter-spacing:0.59px;">57ms</div></div><div class="ev" style="top:1046.0px;height:229px;border-left-color:#ef4444;background:#fef3f2"><div class="tx" style="left:83.5px;top:29.5px;font-size:22px;line-height:26.4px;color:#1e293b;font-weight:700;transform:translateX(-50%);letter-spacing:0.65px;">15:55:23</div><div class="msgid mono" style="top:63.4px;height:22px;left:4.0px"><svg class="ic" style="width:17px;height:17px;margin-right:6px" viewBox="0 0 24 24" fill="none" stroke="#9c9c9c" stroke-width="1.5" stroke-linecap="round"><path d="M2.4 18.0V13.5a9.6 9.6 0 0 1 19.2 0v4.5"/><path d="M5.0 21.0V13.5a7.0 7.0 0 0 1 14.0 0v7.5"/><path d="M7.6 21.0V13.5a4.4 4.4 0 0 1 8.8 0v7.5"/><path d="M10.2 20.0V13.5a1.8 1.8 0 0 1 3.6 0v6.5"/><path d="M5.5 3.4C7.5 2.2 9.7 1.6 12 1.6s4.5.6 6.5 1.8"/></svg><span>msg-004</span></div><div class="cir" style="background:#f44336;left:167.2px"><svg class="ic" style="width:32px;height:32px;" viewBox="0 0 24 24" fill="#fff"><path d="M10 3h4v12h-4zM12 17a2 2 0 1 0 0 4 2 2 0 0 0 0-4z"/></svg></div><div class="row" style="top:32.1px;left:256.3px;line-height:32px"><span style="font-size:23.9px;font-weight:700;color:#1e293b;letter-spacing:-0.64px">Technical QA Agent</span><svg class="ic" style="width:28px;height:28px;margin:-7.5px 27.6px 0 7.8px" viewBox="0 0 24 24" fill="#9e9e9e"><path d="m12 4-1.41 1.41L16.17 11H4v2h12.17l-5.58 5.59L12 20l8-8z"/></svg><span style="font-size:24px;color:#6b7280;letter-spacing:0.16px">Master Orchestrator</span></div><div class="tx" style="left:256.3px;top:86.3px;font-size:24px;line-height:28.8px;color:#374151;letter-spacing:0.08px;">Technical issue detected: Segment 234 exceeds</div><div class="tx" style="left:256.3px;top:124.7px;font-size:24px;line-height:28.8px;color:#374151;letter-spacing:0.58px;">duration limit</div><svg class="ic" style="width:24px;height:24px;position:absolute;left:255.1px;top:178.7px" viewBox="0 0 24 24" fill="#555"><path d="M9 1h6v2H9zm10.03 6.39 1.42-1.42c-.43-.51-.9-.99-1.41-1.41l-1.42 1.42C16.07 4.74 14.12 4 12 4c-4.97 0-9 4.03-9 9s4.02 9 9 9 9-4.03 9-9c0-2.12-.74-4.07-1.97-5.61zM13 14h-2V8h2v6z"/></svg><div class="tx" style="left:284.6px;top:178.7px;font-size:20.5px;line-height:24.6px;color:#757575;letter-spacing:0.59px;">25ms</div></div><div class="ev" style="top:1291.0px;height:190.6px;border-left-color:#1976d2;background:#f9f9fb"><div class="tx" style="left:83.5px;top:29.5px;font-size:22px;line-height:26.4px;color:#1e293b;font-weight:700;transform:translateX(-50%);letter-spacing:0.65px;">15:35:23</div><div class="msgid mono" style="top:63.4px;height:22px;left:4.0px"><svg class="ic" style="width:17px;height:17px;margin-right:6px" viewBox="0 0 24 24" fill="none" stroke="#9c9c9c" stroke-width="1.5" stroke-linecap="round"><path d="M2.4 18.0V13.5a9.6 9.6 0 0 1 19.2 0v4.5"/><path d="M5.0 21.0V13.5a7.0 7.0 0 0 1 14.0 0v7.5"/><path d="M7.6 21.0V13.5a4.4 4.4 0 0 1 8.8 0v7.5"/><path d="M10.2 20.0V13.5a1.8 1.8 0 0 1 3.6 0v6.5"/><path d="M5.5 3.4C7.5 2.2 9.7 1.6 12 1.6s4.5.6 6.5 1.8"/></svg><span>msg-003</span></div><div class="cir" style="background:#1976d2;left:167.2px"><svg class="ic" style="width:34px;height:34px;margin-left:3px" viewBox="0 0 24 24" fill="#fff"><path d="M2.01 21 23 12 2.01 3 2 10l15 2-15 2z"/></svg></div><div class="row" style="top:32.1px;left:256.3px;line-height:32px"><span style="font-size:23.9px;font-weight:700;color:#1e293b;letter-spacing:-0.43px">Master Orchestrator</span><svg class="ic" style="width:28px;height:28px;margin:-7.5px 27.6px 0 7.8px" viewBox="0 0 24 24" fill="#9e9e9e"><path d="m12 4-1.41 1.41L16.17 11H4v2h12.17l-5.58 5.59L12 20l8-8z"/></svg><span style="font-size:24px;color:#6b7280;letter-spacing:0.1px">Terminology Guardian</span></div><div class="tx" style="left:256.3px;top:86.3px;font-size:24px;line-height:28.8px;color:#374151;letter-spacing:0.18px;">Extract and validate terminology glossary for project</div><svg class="ic" style="width:24px;height:24px;position:absolute;left:255.1px;top:140.3px" viewBox="0 0 24 24" fill="#555"><path d="M9 1h6v2H9zm10.03 6.39 1.42-1.42c-.43-.51-.9-.99-1.41-1.41l-1.42 1.42C16.07 4.74 14.12 4 12 4c-4.97 0-9 4.03-9 9s4.02 9 9 9 9-4.03 9-9c0-2.12-.74-4.07-1.97-5.61zM13 14h-2V8h2v6z"/></svg><div class="tx" style="left:284.6px;top:140.3px;font-size:20.5px;line-height:24.6px;color:#757575;letter-spacing:0.59px;">39ms</div></div><div class="ev" style="top:1497.6px;height:190.6px;border-left-color:#1976d2;background:#f9f9fb"></div></div><div id="xl"><i></i><svg style="position:absolute;left:9.8px;top:7.6px;width:56px;height:56px" viewBox="0 0 56 56"><text x="12.8" y="28.3" font-size="16" fill="#fff" font-family="&quot;Liberation Sans&quot;,&quot;Noto Sans CJK SC&quot;,sans-serif">文</text><text x="26.8" y="42.1" font-size="25" fill="#fff" font-family="&quot;Liberation Sans&quot;,sans-serif">A</text><path d="M33 15h9v8.5M14.5 32.6v8.6h8.7" stroke="#fff" stroke-width="2" fill="none"/></svg></div>
</body></html>
